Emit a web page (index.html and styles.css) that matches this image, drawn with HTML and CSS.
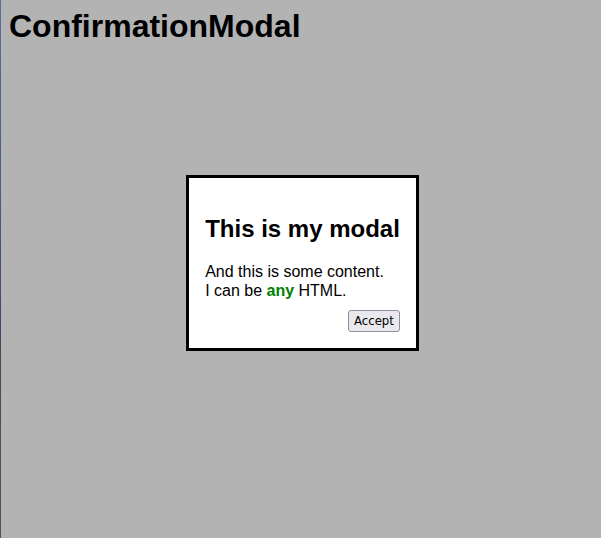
FILE: index.html
```html
<!DOCTYPE html>
<html lang="en">
<head>
<meta charset="utf-8">
<title>ConfirmationModal</title>
<link rel="stylesheet" href="styles.css">
</head>
<body>
<div class="edge"></div>
<h1 class="title">ConfirmationModal</h1>
<div class="overlay">
  <div class="modal">
    <h2 class="modal-title">This is my modal</h2>
    <p class="modal-body">And this is some content.<br>I can be <strong class="accent">any</strong> HTML.</p>
    <div class="modal-actions">
      <button class="btn" type="button">Accept</button>
    </div>
  </div>
</div>
</body>
</html>
```

FILE: styles.css
```css
html, body {
  height: 100%;
}
body {
  margin: 0;
  padding: 8px 8px 8px 9px;
  box-sizing: border-box;
  background: #b3b3b3;
  font-family: "Liberation Sans", Arial, sans-serif;
  color: #000;
  overflow: hidden;
}
.edge {
  position: fixed;
  left: 0;
  top: 0;
  bottom: 0;
  width: 1px;
  background: linear-gradient(to bottom, #5a6f9a 0, #485a80 40%, #3c4866 63%, #4a4a4a 65%, #555 100%);
}
.title {
  margin: 0;
  font-size: 32px;
  font-weight: bold;
}
.overlay {
  position: fixed;
  inset: 0;
  display: flex;
  align-items: center;
  justify-content: center;
  padding: 0 0 12px 4px;
}
.modal {
  background: #fff;
  border: 3px solid #000;
  padding: 17px 16px 16px;
}
.modal-title {
  margin: 20px 0 19px;
  font-size: 24px;
  font-weight: bold;
}
.modal-body {
  margin: 0 0 10px;
  font-size: 16px;
  line-height: 19px;
}
.accent {
  color: #008000;
}
.modal-actions {
  display: flex;
  justify-content: flex-end;
}
.btn {
  font-family: "DejaVu Sans Condensed", "DejaVu Sans", sans-serif;
  font-stretch: condensed;
  font-size: 13px;
  line-height: 16px;
  padding: 2px 5px;
  border: 1px solid #8f8f9d;
  border-radius: 3px;
  background: #e9e9ed;
  color: #000;
}
```
